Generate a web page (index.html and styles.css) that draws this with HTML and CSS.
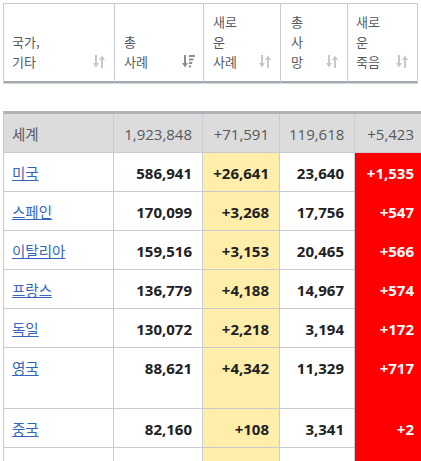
FILE: index.html
```html
<!DOCTYPE html>
<html lang="ko">
<head>
<meta charset="utf-8">
<title>국가별 현황</title>
<link rel="stylesheet" href="styles.css">
</head>
<body>
<div class="wrap">
  <table class="head">
    <tr>
      <th class="h1"><div class="hc"><span>국가,<br>기타</span>
        <svg class="sort" viewBox="0 0 12 13" width="12" height="13"><path d="M3 0V9" stroke="currentColor" stroke-width="2"/><path d="M0 8H6L3 12.5Z" fill="currentColor"/><path d="M9 13V4" stroke="currentColor" stroke-width="2"/><path d="M6 5H12L9 0.5Z" fill="currentColor"/></svg></div></th>
      <th class="h2"><div class="hc"><span>총<br>사례</span>
        <svg class="sort on" viewBox="0 0 13 13" width="13" height="13"><path d="M3 0V9" stroke="currentColor" stroke-width="2"/><path d="M0 8H6L3 12.5Z" fill="currentColor"/><rect x="7" y="0" width="6" height="2" fill="currentColor"/><rect x="7" y="3.5" width="4.5" height="2" fill="currentColor"/><rect x="7" y="7" width="3.2" height="2" fill="currentColor"/><rect x="7" y="10.5" width="2" height="2" fill="currentColor"/></svg></div></th>
      <th class="h3"><div class="hc"><span>새로<br>운<br>사례</span>
        <svg class="sort" viewBox="0 0 12 13" width="12" height="13"><path d="M3 0V9" stroke="currentColor" stroke-width="2"/><path d="M0 8H6L3 12.5Z" fill="currentColor"/><path d="M9 13V4" stroke="currentColor" stroke-width="2"/><path d="M6 5H12L9 0.5Z" fill="currentColor"/></svg></div></th>
      <th class="h4"><div class="hc"><span>총<br>사<br>망</span>
        <svg class="sort" viewBox="0 0 12 13" width="12" height="13"><path d="M3 0V9" stroke="currentColor" stroke-width="2"/><path d="M0 8H6L3 12.5Z" fill="currentColor"/><path d="M9 13V4" stroke="currentColor" stroke-width="2"/><path d="M6 5H12L9 0.5Z" fill="currentColor"/></svg></div></th>
      <th class="h5"><div class="hc"><span>새로<br>운<br>죽음</span>
        <svg class="sort" viewBox="0 0 12 13" width="12" height="13"><path d="M3 0V9" stroke="currentColor" stroke-width="2"/><path d="M0 8H6L3 12.5Z" fill="currentColor"/><path d="M9 13V4" stroke="currentColor" stroke-width="2"/><path d="M6 5H12L9 0.5Z" fill="currentColor"/></svg></div></th>
    </tr>
  </table>

  <table class="body">
    <tr class="world">
      <td class="c1">세계</td>
      <td class="c2">1,923,848</td>
      <td class="c3">+71,591</td>
      <td class="c4">119,618</td>
      <td class="c5">+5,423</td>
    </tr>
    <tr>
      <td class="c1"><a href="#">미국</a></td>
      <td class="c2">586,941</td>
      <td class="c3 new">+26,641</td>
      <td class="c4">23,640</td>
      <td class="c5 dead">+1,535</td>
    </tr>
    <tr>
      <td class="c1"><a href="#">스페인</a></td>
      <td class="c2">170,099</td>
      <td class="c3 new">+3,268</td>
      <td class="c4">17,756</td>
      <td class="c5 dead">+547</td>
    </tr>
    <tr>
      <td class="c1"><a href="#">이탈리아</a></td>
      <td class="c2">159,516</td>
      <td class="c3 new">+3,153</td>
      <td class="c4">20,465</td>
      <td class="c5 dead">+566</td>
    </tr>
    <tr>
      <td class="c1"><a href="#">프랑스</a></td>
      <td class="c2">136,779</td>
      <td class="c3 new">+4,188</td>
      <td class="c4">14,967</td>
      <td class="c5 dead">+574</td>
    </tr>
    <tr>
      <td class="c1"><a href="#">독일</a></td>
      <td class="c2">130,072</td>
      <td class="c3 new">+2,218</td>
      <td class="c4">3,194</td>
      <td class="c5 dead">+172</td>
    </tr>
    <tr class="tall">
      <td class="c1"><a href="#">영국</a></td>
      <td class="c2">88,621</td>
      <td class="c3 new">+4,342</td>
      <td class="c4">11,329</td>
      <td class="c5 dead">+717</td>
    </tr>
    <tr>
      <td class="c1"><a href="#">중국</a></td>
      <td class="c2">82,160</td>
      <td class="c3 new">+108</td>
      <td class="c4">3,341</td>
      <td class="c5 dead">+2</td>
    </tr>
    <tr class="next">
      <td class="c1"></td>
      <td class="c2"></td>
      <td class="c3 new"></td>
      <td class="c4"></td>
      <td class="c5 dead"></td>
    </tr>
  </table>
</div>
</body>
</html>
```

FILE: styles.css
```css
html, body {
  margin: 0;
  padding: 0;
  background: #fff;
}

.wrap {
  width: 421px;
  height: 461px;
  overflow: hidden;
  padding: 3px 0 0 3px;
  box-sizing: border-box;
  font-family: "Open Sans", "Noto Sans CJK KR", sans-serif;
}

table {
  border-collapse: separate;
  border-spacing: 0;
  table-layout: fixed;
}

/* ---------- sticky-style header ---------- */
.head {
  border-top: 1px solid #c8ccd1;
  border-left: 1px solid #c8ccd1;
  width: 414px;
  box-shadow: 0 1px 0 #d6d6d6;
}

.head th {
  box-sizing: border-box;
  height: 79px;
  padding: 8px 9px 9px 8px;
  border-right: 1px solid #c8ccd1;
  border-bottom: 2px solid #a2a9b1;
  vertical-align: bottom;
  text-align: left;
  font-family: "Noto Sans CJK KR", sans-serif;
  font-weight: normal;
  font-size: 13px;
  line-height: 20px;
  color: #54595d;
}

.head .h1 { width: 111px; }
.head .h2 { width: 89px; padding-left: 9px; }
.head .h3 { width: 77px; padding-left: 9px; }
.head .h4 { width: 67px; padding-left: 10px; }
.head .h5 { width: 70px; }

.hc {
  display: flex;
  justify-content: space-between;
  align-items: flex-end;
}

.sort {
  flex: none;
  margin-bottom: 4px;
  color: #c4c8cc;
}

.sort.on {
  color: #8a8f94;
  margin-right: -1px;
}

/* ---------- data table ---------- */
.body {
  margin-top: 28px;
  border-top: 3px solid #aeb3b8;
  border-left: 1px solid #c8ccd1;
  width: 421px;
}

.body td {
  box-sizing: border-box;
  height: 39px;
  padding: 9px 10px 7px 9px;
  border-right: 1px solid #c8ccd1;
  border-bottom: 1px solid #c8ccd1;
  vertical-align: top;
  text-align: right;
  font-size: 15px;
  line-height: 22px;
  font-weight: bold;
  color: #202122;
  white-space: nowrap;
}

.body .c1 { width: 110px; text-align: left; font-weight: normal; padding-left: 8px; }
.body .c2 { width: 89px; }
.body .c3 { width: 77px; }
.body .c4 { width: 75px; }
.body .c5 { width: 70px; }

.body .tall td { height: 61px; }

.body a {
  font-family: "Noto Sans CJK KR", sans-serif;
  font-size: 14.5px;
  color: #3366bb;
  text-decoration: underline;
}

.world td {
  background: #dcdcdc;
  font-weight: normal;
  color: #54595d;
}

.world .c1 {
  font-family: "Noto Sans CJK KR", sans-serif;
  font-size: 14.5px;
  color: #54595d;
}

.body .new { background: #ffeeaa; }

.body .dead {
  background: #ff0000;
  color: #fff;
  border-bottom-color: #ff0000;
}
```
